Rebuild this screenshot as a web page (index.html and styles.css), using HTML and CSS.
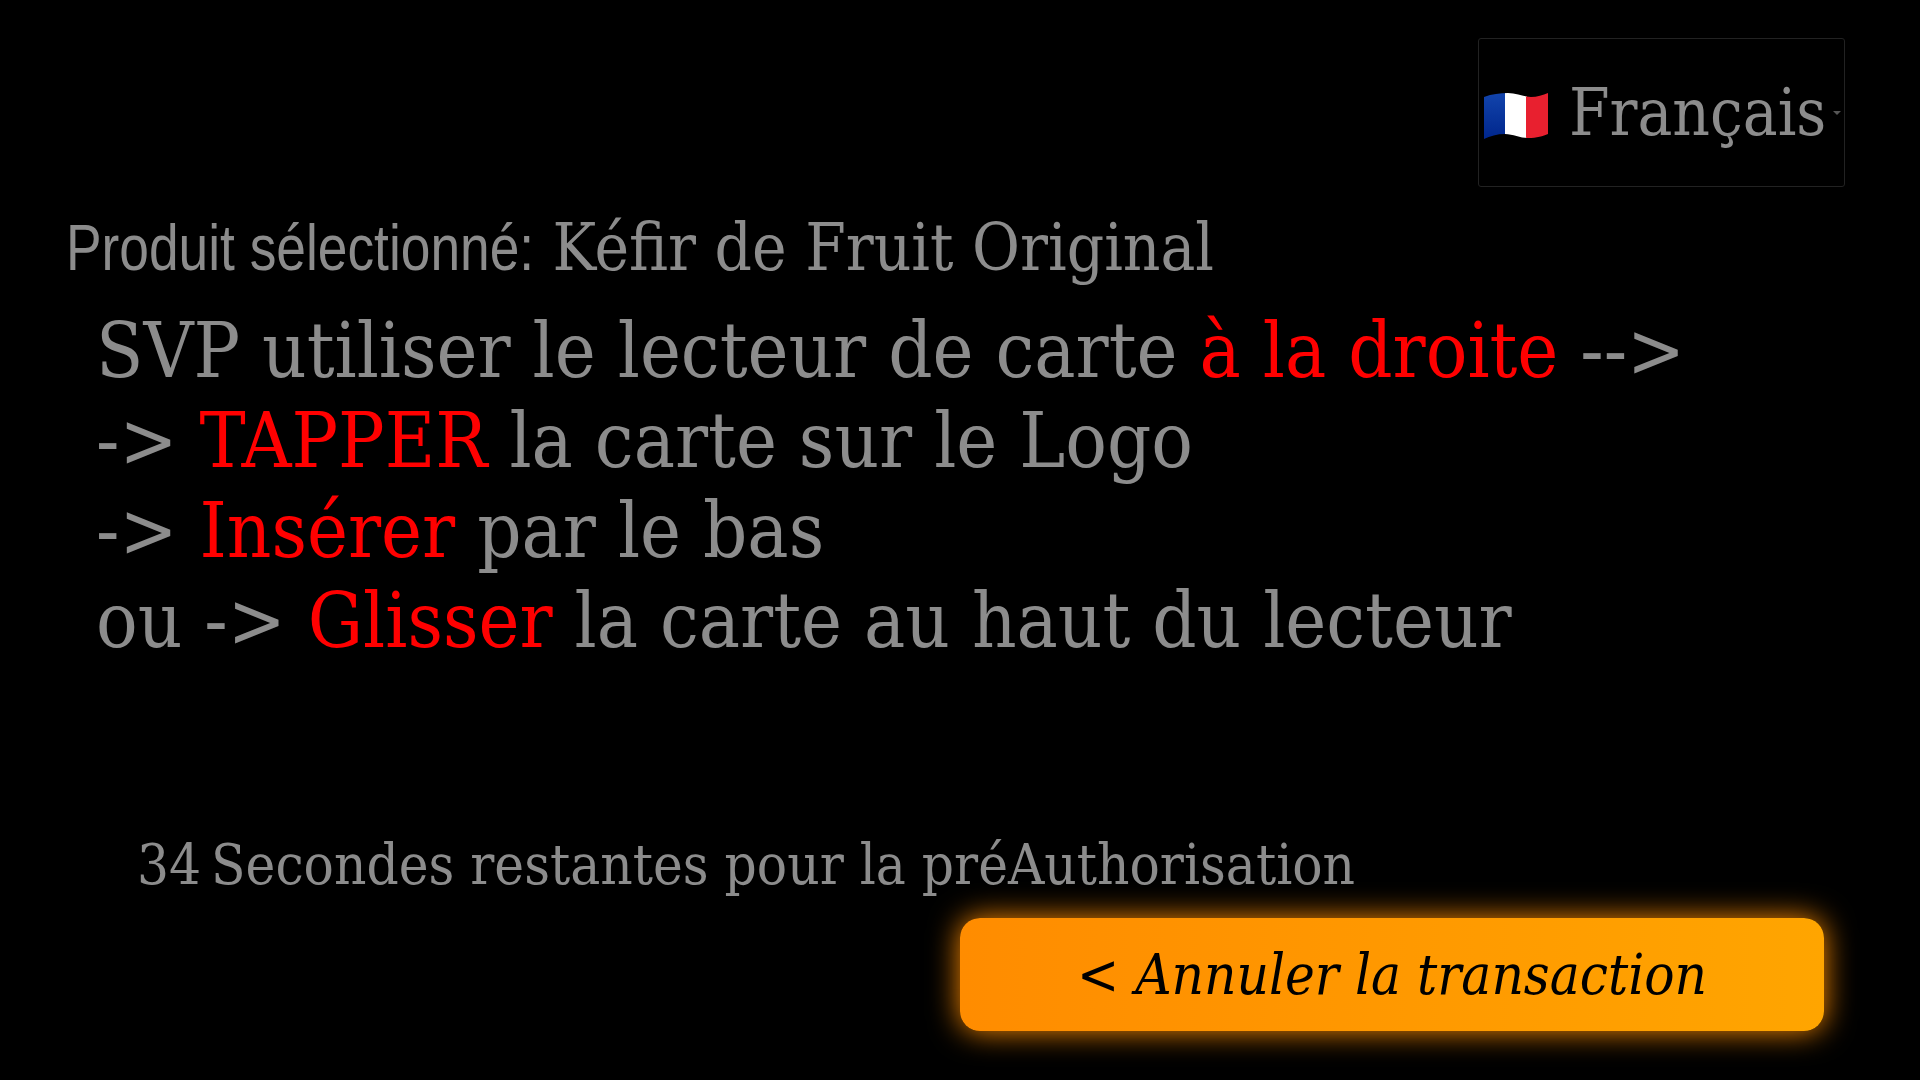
FILE: index.html

```html
<!DOCTYPE html>
<html lang="fr">
<head>
  <meta charset="UTF-8" />
  <title>Paiement</title>
  <link rel="stylesheet" href="styles.css">
</head>
<body>
  <div class="top">
    <div class="lang">
      <svg class="flag" viewBox="0 0 64 46" width="64" height="46">
        <defs>
          <clipPath id="wave"><path d="M0 4 C8 1 16 0 24 0 C32 0 40 4 47 4 C53 4 59 2 64 0 L64 41 C59 43 53 45 44 45 C36 45 29 41 21 41 C13 41 6 43 0 46 Z"/></clipPath>
          <linearGradient id="blue" x1="0" y1="0" x2="0" y2="1">
            <stop offset="0" stop-color="#1244ac"/>
            <stop offset="1" stop-color="#00268c"/>
          </linearGradient>
        </defs>
        <g clip-path="url(#wave)">
          <rect x="0" y="0" width="22" height="46" fill="url(#blue)"/>
          <rect x="21" y="0" width="22" height="46" fill="#fff"/>
          <rect x="42" y="0" width="22" height="46" fill="#e8202f"/>
        </g>
      </svg>
      <span class="lang-name">Français</span>
      <span class="caret"></span>
    </div>
  </div>

  <h2 class="product"><span class="label">Produit sélectionné:</span> Kéfir de Fruit Original</h2>

  <div class="steps">
    <div>SVP utiliser le lecteur de carte <span class="hot">à la droite</span> --&gt;</div>
    <div>-&gt; <span class="hot">TAPPER</span> la carte sur le Logo</div>
    <div>-&gt; <span class="hot">Insérer</span> par le bas</div>
    <div>ou -&gt; <span class="hot">Glisser</span> la carte au haut du lecteur</div>
  </div>

  <div class="countdown"><span class="secs">34</span> Secondes restantes pour la préAuthorisation</div>

  <div class="actions">
    <button class="cancel">&lt; Annuler la transaction</button>
  </div>
</body>
</html>
```

FILE: styles.css

```css
body {
  margin: 0;
  height: 1080px;
  overflow: hidden;
  background: #000;
  color: #8c8c8c;
  font-family: "DejaVu Serif Condensed", "DejaVu Serif", serif;
  font-stretch: condensed;
}
.top {
  display: flex;
  justify-content: flex-end;
  padding: 38px 75px 0 0;
}
.lang {
  box-sizing: border-box;
  width: 367px;
  height: 149px;
  border: 1px solid #222;
  border-radius: 3px;
  display: flex;
  align-items: center;
  padding-left: 5px;
  font-size: 65px;
}
.flag {
  margin-top: 6px;
  filter: blur(0.4px);
}
.lang-name {
  margin-left: 21px;
}
.caret {
  margin-left: 7px;
  border-left: 4px solid transparent;
  border-right: 4px solid transparent;
  border-top: 4px solid #555;
}
.product {
  margin: 23px 0 0 66px;
  font-size: 65px;
  font-weight: normal;
  line-height: 76px;
}
.label {
  display: inline-block;
  font-family: "Liberation Sans", sans-serif;
  font-stretch: normal;
  transform: scaleX(0.82);
  transform-origin: left;
  margin-right: -103px;
}
.steps {
  margin: 20px 0 0 96px;
  font-size: 77px;
  line-height: 90px;
}
.hot {
  color: #f00;
}
.countdown {
  margin: 165px 0 0 137px;
  font-size: 56px;
  line-height: 68px;
}
.secs {
  margin-right: -6px;
}
.actions {
  display: flex;
  justify-content: flex-end;
  padding: 19px 96px 0 0;
}
.cancel {
  width: 864px;
  height: 113px;
  border: none;
  border-radius: 20px;
  background: linear-gradient(to right, #ff8c00, #ffa500);
  box-shadow: 0 0 30px #ff8c00;
  color: #000;
  font-family: inherit;
  font-stretch: condensed;
  font-style: italic;
  font-size: 56px;
}
```
